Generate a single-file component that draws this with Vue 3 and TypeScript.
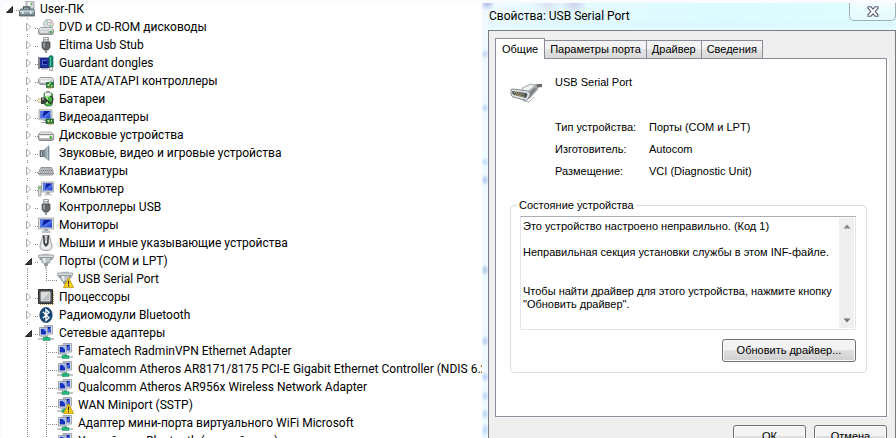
<script setup lang="ts">
import { computed, ref } from 'vue'

interface DeviceNode {
  label: string
  icon: string
  depth: number
  open?: boolean
  warning?: boolean
  last?: boolean
}

interface Property {
  name: string
  value: string
}

const nodes = ref<DeviceNode[]>([
  { label: 'User-ПК', icon: 'machine', depth: 0, open: true },
  { label: 'DVD и CD-ROM дисководы', icon: 'optical', depth: 1, open: false },
  { label: 'Eltima Usb Stub', icon: 'usb', depth: 1, open: false },
  { label: 'Guardant dongles', icon: 'dongle', depth: 1, open: false },
  { label: 'IDE ATA/ATAPI контроллеры', icon: 'ide', depth: 1, open: false },
  { label: 'Батареи', icon: 'battery', depth: 1, open: false },
  { label: 'Видеоадаптеры', icon: 'video', depth: 1, open: false },
  { label: 'Дисковые устройства', icon: 'disk', depth: 1, open: false },
  { label: 'Звуковые, видео и игровые устройства', icon: 'sound', depth: 1, open: false },
  { label: 'Клавиатуры', icon: 'keyboard', depth: 1, open: false },
  { label: 'Компьютер', icon: 'computer', depth: 1, open: false },
  { label: 'Контроллеры USB', icon: 'usb', depth: 1, open: false },
  { label: 'Мониторы', icon: 'monitor', depth: 1, open: false },
  { label: 'Мыши и иные указывающие устройства', icon: 'mouse', depth: 1, open: false },
  { label: 'Порты (COM и LPT)', icon: 'port', depth: 1, open: true },
  { label: 'USB Serial Port', icon: 'port', depth: 2, warning: true, last: true },
  { label: 'Процессоры', icon: 'cpu', depth: 1, open: false },
  { label: 'Радиомодули Bluetooth', icon: 'bluetooth', depth: 1, open: false },
  { label: 'Сетевые адаптеры', icon: 'network', depth: 1, open: true },
  { label: 'Famatech RadminVPN Ethernet Adapter', icon: 'network', depth: 2 },
  { label: 'Qualcomm Atheros AR8171/8175 PCI-E Gigabit Ethernet Controller (NDIS 6.20)', icon: 'network', depth: 2 },
  { label: 'Qualcomm Atheros AR956x Wireless Network Adapter', icon: 'network', depth: 2 },
  { label: 'WAN Miniport (SSTP)', icon: 'network', depth: 2, warning: true },
  { label: 'Адаптер мини-порта виртуального WiFi Microsoft', icon: 'network', depth: 2 },
  { label: 'Устройства Bluetooth (личной сети)', icon: 'network', depth: 2 },
])

const visibleNodes = computed(() => {
  const shown: DeviceNode[] = []
  let closedDepth = Infinity
  for (const node of nodes.value) {
    if (node.depth > closedDepth) continue
    closedDepth = node.open === false ? node.depth : Infinity
    shown.push(node)
  }
  return shown
})

const tabs = ['Общие', 'Параметры порта', 'Драйвер', 'Сведения']
const activeTab = ref(tabs[0])

const properties: Property[] = [
  { name: 'Тип устройства:', value: 'Порты (COM и LPT)' },
  { name: 'Изготовитель:', value: 'Autocom' },
  { name: 'Размещение:', value: 'VCI (Diagnostic Unit)' },
]

const statusText = [
  'Это устройство настроено неправильно. (Код 1)',
  '',
  'Неправильная секция установки службы в этом INF-файле.',
  '',
  '',
  'Чтобы найти драйвер для этого устройства, нажмите кнопку',
  '"Обновить драйвер".',
].join('\n')
</script>

<template>
  <svg class="sprite" width="0" height="0" aria-hidden="true">
    <defs>
      <linearGradient id="g-screen" x1="0" y1="0" x2="1" y2="1">
        <stop offset="0" stop-color="#1a2fc0" />
        <stop offset="0.45" stop-color="#0a1a9c" />
        <stop offset="0.55" stop-color="#4d78ee" />
        <stop offset="1" stop-color="#1631c4" />
      </linearGradient>
      <linearGradient id="g-metal" x1="0" y1="0" x2="0" y2="1">
        <stop offset="0" stop-color="#f4f5f6" />
        <stop offset="1" stop-color="#999ea3" />
      </linearGradient>
      <linearGradient id="g-cone" x1="0" y1="0" x2="1" y2="0">
        <stop offset="0" stop-color="#6f8088" />
        <stop offset="1" stop-color="#cfdbe2" />
      </linearGradient>
      <linearGradient id="g-cable" x1="0" y1="0" x2="1" y2="1">
        <stop offset="0" stop-color="#f2f4f5" />
        <stop offset="1" stop-color="#60676c" />
      </linearGradient>
    </defs>

    <symbol id="i-machine" viewBox="0 0 16 16">
      <path d="M7 0h7l1 1v8H7z" fill="#cfd2d4" stroke="#8c9092" stroke-width=".7" />
      <path d="M9 1h2v5H9z" fill="#f7f7f7" /><path d="M12 2h1v2h-1z" fill="#3fbf46" />
      <path d="M4.500 8V6h6v2" fill="none" stroke="#4d5b60" stroke-width="1.300" />
      <path d="M1.500 8h13l1 2.500V15H.5v-4.500z" fill="#8ba0a6" stroke="#4d5b60" stroke-width=".8" />
      <path d="M1 9.500h14v1.800H1z" fill="#bccbd0" /><path d="M3 10h1.500v3H3zM11 10h1.500v3H11z" fill="#e9edef" />
      <path d="M1 13.500h14V15H1z" fill="#5f7278" />
    </symbol>
    <symbol id="i-optical" viewBox="0 0 16 16">
      <circle cx="10.500" cy="5" r="4.800" fill="#dfe3e4" stroke="#8c9294" stroke-width=".7" />
      <path d="M10.500 5 7 2l2-1.500zM10.500 5l4 2-1.500 2z" fill="#a8d7b0" /><path d="M10.500 5 14 1.500l1 2z" fill="#e6b7c4" />
      <circle cx="10.500" cy="5" r="1.500" fill="#fff" stroke="#888" stroke-width=".6" />
      <path d="M2.500 8.500h11l2 2V14l-1 1.500h-13L.5 14v-3.500z" fill="url(#g-metal)" stroke="#777b7e" stroke-width=".7" />
      <path d="M2 12.500h8v1H2z" fill="#fff" /><path d="M12 12h2v2h-2z" fill="#35b52d" />
    </symbol>
    <symbol id="i-usb" viewBox="0 0 16 16">
      <path d="M5.500.5h5V5h-5z" fill="#eceeee" stroke="#888c8e" stroke-width=".8" />
      <path d="M6.500 2H7.500v1.500h-1zM8.800 2h1v1.500h-1z" fill="#666" />
      <path d="M4 5h8v5.500L10 13H6l-2-2.500z" fill="#62676a" stroke="#42474a" stroke-width=".7" />
      <path d="M5 5.500h2V11l-2-1z" fill="#92989b" /><path d="M7.200 13h1.600v3H7.200z" fill="#777c7f" />
    </symbol>
    <symbol id="i-dongle" viewBox="0 0 16 16">
      <path d="M0 2.500h12v1H0zM2 3h10v10H2z" fill="#222b8f" />
      <path d="M0 2h2v12H0z" fill="#81868f" /><path d="M4 5h5v5H4z" fill="#4269dc" /><path d="M5 6h4v3H5z" fill="#0c1780" />
      <path d="M3 13h7v1.500H3z" fill="#b6bac4" />
      <path d="M11 1.500q2-2 4 0V12h-4z" fill="#168d78" stroke="#0d6556" stroke-width=".7" /><path d="M12 2h1v9h-1z" fill="#4bc0a7" />
      <path d="M11.500 12h3v3.500h-3z" fill="#e7eaeb" stroke="#777" stroke-width=".6" />
    </symbol>
    <symbol id="i-ide" viewBox="0 0 16 16">
      <path d="M2 4.500h12l1.500 2v3l-1.500 2H2L.5 9.500v-3z" fill="url(#g-metal)" stroke="#808487" stroke-width=".8" />
      <path d="M2.500 7.500h10v2h-10z" fill="#fff" />
      <path d="M8.500 9.500h7v5h-7z" fill="#278048" stroke="#165631" stroke-width=".7" /><path d="M11 8h2v3h-2z" fill="#71c786" />
      <path d="M9.500 11h2v2h-2zM13 12h1.500v1.500H13z" fill="#d1e06d" /><path d="M9.500 14.500h5v1h-5z" fill="#c69d40" />
    </symbol>
    <symbol id="i-battery" viewBox="0 0 16 16">
      <path d="M7 1.500h6l1.500 1.500v10L13 15H8l-2-2V3z" fill="#41b83b" stroke="#5d6a5d" stroke-width=".8" />
      <path d="M7 1.500h6v4H7z" fill="#e9eceb" /><path d="M8 0h4v1.500H8z" fill="#92989a" /><path d="M8 5h2v8H8z" fill="#a9eb91" />
      <path d="M12 5c4 1 4 5 0 8" fill="none" stroke="#373737" stroke-width="1.200" />
      <path d="M0 8h3M0 11h3" stroke="#c5a74b" stroke-width="1.200" />
      <path d="M3 6.500h3l3 1.500v3l-3 2H3z" fill="#3d4040" /><path d="M4 7.500h2v1.500H4z" fill="#a9aaa0" /><path d="M9 9.500c2 0 1 3 4 2.500" fill="none" stroke="#302f29" stroke-width="1.600" />
    </symbol>
    <symbol id="i-monitor" viewBox="0 0 16 16">
      <path d="M.5 1h15v11H.5z" fill="#dcdedf" stroke="#9ca0a2" stroke-width=".8" />
      <path d="M2 2.500h12v8H2z" fill="url(#g-screen)" /><path d="M2 2.500h4L3.500 10.500H2z" fill="#5679e5" />
      <path d="M6 12h4v2H6z" fill="#a9adb0" /><path d="M4 14h8v1.500H4z" fill="#d2d5d6" stroke="#999d9f" stroke-width=".5" />
    </symbol>
    <symbol id="i-video" viewBox="0 0 16 16">
      <path d="M1 .8h13v10H1z" fill="#dcdedf" stroke="#989c9f" stroke-width=".8" /><path d="M2.500 2h10v7.500h-10z" fill="url(#g-screen)" />
      <path d="M2.500 2H6L4 9.500H2.500z" fill="#5679e5" /><path d="M5 11h4v2H3v1h6z" fill="#a7abad" />
      <path d="M8 10h7.500v4.500H8z" fill="#267b45" stroke="#15502d" stroke-width=".7" /><path d="M9.500 11h2v2h-2zM13 11h1v2h-1z" fill="#c9dd72" /><path d="M10 14.500h5v1h-5z" fill="#bd9a3e" />
    </symbol>
    <symbol id="i-disk" viewBox="0 0 16 16">
      <path d="M2.500 5h11l2 2.500H.5z" fill="#e3e4e5" stroke="#979a9d" stroke-width=".7" />
      <path d="M.5 7.500h15v5l-1 1h-13l-1-1z" fill="url(#g-metal)" stroke="#76797c" stroke-width=".8" />
      <path d="M2 9h9v2H2z" fill="#fff" /><path d="M12 9h1.500v3H12z" fill="#28ba20" />
    </symbol>
    <symbol id="i-sound" viewBox="0 0 16 16">
      <path d="M2 5.500h3.500v6H2z" fill="#606c74" stroke="#4f595f" stroke-width=".7" /><path d="M3 6h1v5H3z" fill="#bcc5ca" />
      <path d="M5.500 5.500 11 .5v15l-5.500-4z" fill="url(#g-cone)" stroke="#84919a" stroke-width=".7" /><path d="M10 1.500h1v13h-1z" fill="#758f9e" />
    </symbol>
    <symbol id="i-keyboard" viewBox="0 0 16 16">
      <path d="M3 4.500h10.500l2 5v1.500L14 12H2L.5 11V9.500z" fill="#d7d9dc" stroke="#7f8286" stroke-width=".8" />
      <path d="M3.500 6h10M3 7.500h11M2 9h12.500" stroke="#606469" stroke-width=".9" stroke-dasharray="1.300 .7" /><path d="M1 10.500h14" stroke="#8c8f93" />
    </symbol>
    <symbol id="i-computer" viewBox="0 0 16 16">
      <path d="M3.500 1h12v10h-12z" fill="#dcdedf" stroke="#989c9f" stroke-width=".8" /><path d="M5 2.300h9.500v7.200H5z" fill="url(#g-screen)" />
      <path d="M5 2.300h3.500L6.500 9.500H5z" fill="#5679e5" /><path d="M8 11h4v2H8z" fill="#a7abad" /><path d="M6 13h8v1.500H6z" fill="#cdd0d2" />
      <path d="M.5 5h2.500v10H.5z" fill="#d6dbd8" stroke="#899089" stroke-width=".7" /><path d="M1 6h1.500v2H1z" fill="#62bf4f" />
    </symbol>
    <symbol id="i-mouse" viewBox="0 0 16 16">
      <path d="M4.500.5h7c0 4 2.500 7 2.500 11 0 3-2 4-6 4s-6-1-6-4c0-4 2.500-7 2.500-11z" fill="#e4e5e7" stroke="#85888c" stroke-width=".8" />
      <path d="M5 .5h1.500l.5 7 1 2 1-2 .5-7H11L10.500 9 8 12 5.500 9z" fill="#34373a" /><path d="M7.200 2h1.600v4H7.200z" fill="#aeb1b5" />
      <path d="M4 10c1 4 7 4 8 0" fill="none" stroke="#fff" />
    </symbol>
    <symbol id="i-port" viewBox="0 0 16 16">
      <path d="M.5 2h15v2.500H.5z" fill="#dce0e2" stroke="#8f9598" stroke-width=".8" /><path d="M4 .8h8V2H4z" fill="#b2b8ba" />
      <path d="M3 4.500h10L11.500 10h-7z" fill="#c0c7cb" stroke="#889094" stroke-width=".8" /><path d="M5 5h2l.5 5H6z" fill="#eff2f3" />
      <path d="M1.500 4.500h1.500V7H1.500zM13 4.500h1.500V7H13z" fill="#8d9599" /><path d="M6 10h4v3H6z" fill="#939c9f" /><path d="M7.200 13h1.600v3H7.200z" fill="#aab0b2" />
    </symbol>
    <symbol id="i-cpu" viewBox="0 0 16 16">
      <path d="M2 15.300h13M15.300 2v13" stroke="#c29436" stroke-width="1.300" stroke-dasharray="1 1" />
      <path d="M.5.500h14v14H.5z" fill="#4b4d50" stroke="#313234" /><path d="M3 3h9v9H3z" fill="#bcbec0" stroke="#f0f1f1" stroke-width=".8" /><path d="M3.500 11.500v-8h8z" fill="#dddfe0" />
    </symbol>
    <symbol id="i-bluetooth" viewBox="0 0 16 16">
      <ellipse cx="8" cy="8" rx="6.200" ry="7.600" fill="#114477" stroke="#0a3158" stroke-width=".7" />
      <path d="M4.800 4.800 11 10.800 8 13.500v-11l3 2.700-6.200 6" fill="none" stroke="#fff" stroke-width="1.400" />
    </symbol>
    <symbol id="i-network" viewBox="0 0 16 16">
      <path d="M6 .5h8.500v8.500H6z" fill="#d8dbe0" stroke="#9298a1" stroke-width=".8" /><path d="M7.500 1.800h5.500v5.700H7.500z" fill="url(#g-screen)" />
      <path d="M1.500 2.500h8V11h-8z" fill="#dfe2e6" stroke="#8b919b" stroke-width=".8" /><path d="M2.800 3.800h5.400v5.700H2.800z" fill="#1631bd" /><path d="M5 3.800h3.200V7z" fill="#85a5f4" />
      <path d="M9 8.500h3.500v2H9z" fill="#c4c8ce" /><path d="M4 11h5v.8H4z" fill="#abb0b7" /><path d="M7 11.500h3V13H7z" fill="#2ca56e" />
      <path d="M0 13h16v2H0z" fill="#c0c7c5" /><path d="M5 12.500h7v3H5z" fill="#24b779" stroke="#208f60" stroke-width=".5" />
    </symbol>
    <symbol id="i-warning" viewBox="0 0 10 10">
      <path d="M5 .6 9.600 9.500H.4z" fill="#f6d320" stroke="#c49a0a" stroke-width=".8" stroke-linejoin="round" />
      <path d="M4.500 3.300h1v3.200h-1zM4.500 7.300h1v1.200h-1z" fill="#2d2500" />
    </symbol>
  </svg>

  <main class="desktop">
    <section class="manager" aria-label="Устройства">
      <ul class="tree">
        <li v-for="node in visibleNodes" :key="node.label" class="row">
          <span v-if="node.depth > 0" class="cell"></span>
          <span v-if="node.depth > 1" class="cell guide"></span>
          <span v-if="node.depth > 1" class="cell elbow" :class="{ end: node.last }"></span>
          <button
            v-else
            type="button"
            class="cell toggle"
            :class="{ branch: node.depth === 1 }"
            :aria-expanded="node.open"
            :aria-label="node.label"
            @click="node.open = !node.open"
          >
            <svg class="arrow" viewBox="0 0 8 10" aria-hidden="true">
              <path v-if="node.open" d="M6.500 2.500v6h-6z" fill="#404040" stroke="#262626" />
              <path v-else d="M1.500 1v8l4-4z" fill="#fff" stroke="#a6a6a6" />
            </svg>
          </button>
          <span class="icon">
            <svg viewBox="0 0 16 16" aria-hidden="true"><use :href="`#i-${node.icon}`" /></svg>
            <svg v-if="node.warning" class="badge" viewBox="0 0 10 10" aria-hidden="true"><use href="#i-warning" /></svg>
          </span>
          <span class="label">{{ node.label }}</span>
        </li>
      </ul>
    </section>

    <section class="dialog" role="dialog" aria-labelledby="dialog-title">
      <header class="titlebar">
        <h1 id="dialog-title">Свойства: USB Serial Port</h1>
        <button type="button" class="close" aria-label="Закрыть">
          <svg viewBox="0 0 12 11" aria-hidden="true">
            <path d="M1 .8h3L6 3.200 8 .8h3v1.400L8.200 5.500 11 8.800v1.400H8L6 7.800l-2 2.400H1V8.800l2.800-3.300L1 2.200z" fill="#fff" stroke="#5b5d70" stroke-width="1.100" />
          </svg>
        </button>
      </header>

      <div class="client">
        <div class="tabs" role="tablist">
          <button
            v-for="tab in tabs"
            :key="tab"
            type="button"
            role="tab"
            class="tab"
            :class="{ active: tab === activeTab }"
            :aria-selected="tab === activeTab"
            @click="activeTab = tab"
          >{{ tab }}</button>
        </div>

        <div class="panel" role="tabpanel">
          <div class="device">
            <svg viewBox="0 0 32 32" aria-hidden="true">
              <path d="M21 12c3-4 6-4 11-4v3c-4 0-6 1-8 4z" fill="#65696c" />
              <path d="M12 12 20 8l6 1 2 4-8 9-7 3z" fill="url(#g-cable)" stroke="#a1a7aa" stroke-width=".7" />
              <path d="m13 13 8-4 3 1-8 6z" fill="#f2f5f6" /><path d="m18 18 6-6 2 1-7 8z" fill="#767e83" />
              <path d="M1 15q-1-2 2-2l15 2q3 1 2 4l-2 4q-1 2-4 1L3 21q-2-1-2-3z" fill="#dfe3e5" stroke="#777f84" stroke-width=".9" />
              <path d="m2 15 14 2q2 0 1 3l-1 2-12-3q-2-1-2-4z" fill="#4b5359" />
              <path d="m4 16.500 11 2.200M5 18.500l9 2.200" stroke="#d8bd65" stroke-width="1.200" stroke-dasharray="1.200 1" />
              <path d="m14 25 5 1 5-5" fill="none" stroke="#b0b4b6" />
            </svg>
            <span>USB Serial Port</span>
          </div>

          <dl class="facts">
            <template v-for="item in properties" :key="item.name">
              <dt>{{ item.name }}</dt>
              <dd>{{ item.value }}</dd>
            </template>
          </dl>

          <fieldset class="status">
            <legend id="status-label">Состояние устройства</legend>
            <div class="message">
              <textarea readonly aria-labelledby="status-label" :value="statusText"></textarea>
              <div class="scroll">
                <button type="button" aria-label="Вверх">
                  <svg viewBox="0 0 8 5" aria-hidden="true"><path d="M4 .5 7.500 4.500h-7z" fill="#858585" /></svg>
                </button>
                <button type="button" aria-label="Вниз">
                  <svg viewBox="0 0 8 5" aria-hidden="true"><path d="M4 4.500.5.500h7z" fill="#757575" /></svg>
                </button>
              </div>
            </div>
            <button type="button" class="push update">Обновить драйвер...</button>
          </fieldset>
        </div>

        <footer class="actions">
          <button type="button" class="push">ОК</button>
          <button type="button" class="push">Отмена</button>
        </footer>
      </div>
    </section>
  </main>
</template>

<style>
body {
  margin: 0;
  background: #fff;
  overflow: hidden;
}
</style>

<style scoped>
.sprite {
  position: absolute;
}

.desktop {
  display: grid;
  grid-template-columns: minmax(0, 482fr) minmax(0, 414fr);
  height: 100vh;
  overflow: hidden;
  box-sizing: border-box;
  color: #000;
}

button {
  font: inherit;
  color: inherit;
  padding: 0;
}

.manager {
  overflow: hidden;
  background: linear-gradient(#fafbff 3px, transparent 3px), linear-gradient(90deg, #fafbff 3px, #fff 3px);
}

.tree {
  margin: 0;
  padding: 0;
  list-style: none;
  font: 12px/18px Roboto, "Open Sans", sans-serif;
}

.row {
  display: flex;
  height: 18px;
  white-space: nowrap;
}

.cell {
  flex: none;
  width: 19px;
  height: 18px;
  border: 0;
  background: none;
}

.guide {
  background: repeating-linear-gradient(#8a8a8a 0 1px, transparent 1px 2px) 8px 0 / 1px 100% no-repeat;
}

.elbow {
  background:
    repeating-linear-gradient(#8a8a8a 0 1px, transparent 1px 2px) 8px 0 / 1px 100% no-repeat,
    repeating-linear-gradient(90deg, #8a8a8a 0 1px, transparent 1px 2px) 10px 10px / 9px 1px no-repeat;
}

.elbow.end {
  background-size: 1px 11px, 9px 1px;
}

.toggle {
  display: flex;
  align-items: center;
  justify-content: center;
  background: repeating-linear-gradient(90deg, #8a8a8a 0 1px, transparent 1px 2px) 16px 10px / 3px 1px no-repeat;
}

.toggle.branch {
  background:
    repeating-linear-gradient(90deg, #8a8a8a 0 1px, transparent 1px 2px) 16px 10px / 3px 1px no-repeat,
    linear-gradient(#8a8a8a, #8a8a8a) 8px 0 / 1px 1px no-repeat,
    linear-gradient(#8a8a8a, #8a8a8a) 8px 16px / 1px 1px no-repeat;
}

.arrow {
  width: 8px;
  height: 10px;
}

.icon {
  position: relative;
  flex: none;
  width: 16px;
  height: 16px;
  margin: 1px 5px 0 0;
}

.icon svg {
  display: block;
  width: 16px;
  height: 16px;
}

.icon .badge {
  position: absolute;
  right: -1px;
  bottom: -1px;
  width: 11px;
  height: 11px;
}

.dialog {
  display: flex;
  flex-direction: column;
  padding: 3px 0 0 6px;
  font: 11px/13px "Liberation Sans", Arial, sans-serif;
  background:
    linear-gradient(#fafbff 3px, transparent 3px),
    radial-gradient(circle 8px at 5px 3px, #a9b9e8, transparent) no-repeat,
    radial-gradient(circle 14px at 92px 2px, #c9cdec, transparent) no-repeat,
    radial-gradient(circle 16px at 66px 2px, #d9e0f4, transparent) no-repeat,
    radial-gradient(4px 5px at 3px 54px, #c3d4f4, transparent) no-repeat,
    radial-gradient(4px 5px at 3px 108px, #bcd4f6, transparent) no-repeat,
    radial-gradient(4px 5px at 3px 162px, #bcdcfa, transparent) no-repeat,
    radial-gradient(4px 6px at 3px 180px, #acc6ef, transparent) no-repeat,
    radial-gradient(4px 6px at 3px 270px, #acc3ea, transparent) no-repeat,
    radial-gradient(4px 6px at 3px 341px, #b5caf0, transparent) no-repeat,
    radial-gradient(4px 6px at 3px 377px, #b8cff4, transparent) no-repeat,
    radial-gradient(4px 6px at 3px 396px, #bad4f7, transparent) no-repeat,
    radial-gradient(4px 6px at 3px 414px, #b8d4f6, transparent) no-repeat,
    radial-gradient(4px 7px at 3px 430px, #b8d6fa, transparent) no-repeat,
    linear-gradient(90deg, #effaff 0, #e5fbff 80px, #dcfbff 240px, #e0fdff 100%);
}

.titlebar {
  display: flex;
  align-items: flex-start;
  justify-content: space-between;
  height: 27px;
  background: linear-gradient(transparent 15px, #d5f3fc66 22px, #ecfdff99);
}

h1 {
  margin: 4px 0 0 1px;
  font: 12px/18px Roboto, "Open Sans", sans-serif;
}

.close {
  display: flex;
  justify-content: center;
  width: 47px;
  height: 18px;
  padding-top: 3px;
  box-sizing: border-box;
  border: 1px solid #9fb0b8;
  border-top: 0;
  border-radius: 0 0 5px 5px;
  background: linear-gradient(#f1fdff, #e3fbff);
}

.close svg {
  width: 12px;
  height: 11px;
}

.client {
  flex: 1;
  padding: 7px 8px 0 6px;
  border: 1px solid #777c80;
  border-bottom: 0;
  background: #efefef;
}

.tabs {
  display: flex;
  align-items: flex-end;
  height: 20px;
}

.tab {
  height: 18px;
  margin-right: -1px;
  padding: 0 5px;
  box-sizing: border-box;
  border: 1px solid #8b8c99;
  border-bottom: 0;
  background: linear-gradient(#f3f3f3 0 50%, #e4e4e4 50%, #d8d8d8);
}

.tab.active {
  z-index: 1;
  height: 21px;
  margin-bottom: -1px;
  padding: 0 6px;
  background: #fff;
}

.panel {
  padding: 17px 19px 43px 14px;
  border: 1px solid #8b8c99;
  background: #fff;
  box-shadow: 2px 1px #fafafa;
}

.device {
  display: flex;
  gap: 13px;
}

.device svg {
  width: 32px;
  height: 32px;
}

.facts {
  display: grid;
  grid-template-columns: 94px 1fr;
  margin: 8px 0 17px 45px;
  line-height: 22px;
}

.facts dd {
  margin: 0;
}

.status {
  min-width: 0;
  margin: 0;
  padding: 4px 10px 10px 9px;
  border: 1px solid #d5dfe5;
  border-radius: 4px;
}

.status legend {
  margin-left: -3px;
  padding: 0 2px;
}

.message {
  display: flex;
  height: 114px;
  box-sizing: border-box;
  padding: 1px;
  border: 1px solid #e3e5ec;
  border-top-color: #abadb3;
}

textarea {
  flex: 1;
  min-width: 0;
  padding: 2px 1px;
  border: 0;
  outline: 0;
  resize: none;
  overflow: hidden;
  font: inherit;
  white-space: pre;
  color: inherit;
  background: #fff;
}

.scroll {
  display: flex;
  flex-direction: column;
  justify-content: space-between;
  width: 15px;
  background: #efefef;
}

.scroll button {
  height: 16px;
  border: 0;
  background: none;
}

.scroll svg {
  display: block;
  width: 8px;
  height: 5px;
  margin: 0 auto;
}

.push {
  width: 73px;
  height: 23px;
  box-sizing: border-box;
  border: 1px solid #707070;
  border-radius: 3px;
  background: linear-gradient(#f3f3f3 0 48%, #dfdfdf 50%, #cfcfcf);
  box-shadow: inset 0 0 0 1px #fafafa;
}

.update {
  display: block;
  width: 134px;
  margin: 9px 0 0 auto;
}

.actions {
  display: flex;
  justify-content: flex-end;
  gap: 8px;
  padding-top: 8px;
}
</style>
